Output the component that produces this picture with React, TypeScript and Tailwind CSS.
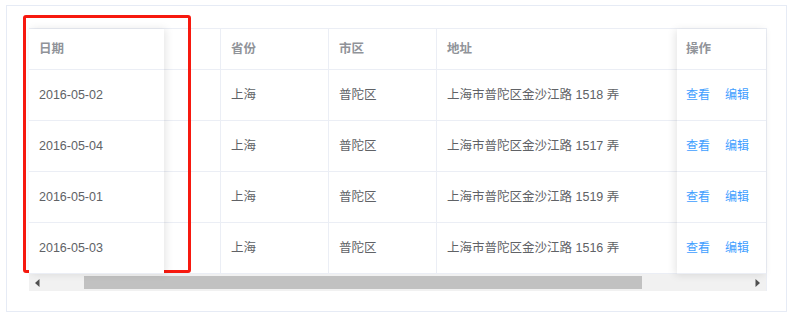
const rows = [
  { date: "2016-05-02", province: "上海", city: "普陀区", address: "上海市普陀区金沙江路 1518 弄" },
  { date: "2016-05-04", province: "上海", city: "普陀区", address: "上海市普陀区金沙江路 1517 弄" },
  { date: "2016-05-01", province: "上海", city: "普陀区", address: "上海市普陀区金沙江路 1519 弄" },
  { date: "2016-05-03", province: "上海", city: "普陀区", address: "上海市普陀区金沙江路 1516 弄" },
];

const font = { fontFamily: '"Liberation Sans", "Noto Sans CJK SC", sans-serif' };

/** One column of the table: a header cell and one body cell per row. */
function Column({
  title,
  cells,
  className = "",
  pad = "pl-[10px]",
}: {
  title: string;
  cells: React.ReactNode[];
  className?: string;
  pad?: string;
}) {
  return (
    <div className={`flex shrink-0 flex-col bg-white ${className}`}>
      <div className={`flex h-[41px] items-center border-b border-[#ebeef5] ${pad} text-[12.5px] font-bold text-[#909399]`}>
        {title}
      </div>
      {cells.map((c, i) => (
        <div
          key={i}
          className={`flex h-[51px] items-center whitespace-nowrap border-b border-[#ebeef5] ${pad} text-[12.5px] text-[#606266]`}
        >
          {c}
        </div>
      ))}
    </div>
  );
}

function Arrow({ dir }: { dir: "left" | "right" }) {
  return (
    <div className="flex h-[17px] w-[17px] shrink-0 items-center justify-center">
      <svg width="5" height="8" viewBox="0 0 5 8">
        {dir === "left" ? (
          <polygon points="4.5,0 4.5,8 0,4" fill="#505050" />
        ) : (
          <polygon points="0.5,0 0.5,8 5,4" fill="#505050" />
        )}
      </svg>
    </div>
  );
}

export default function App() {
  return (
    <div className="relative h-[318px] w-[792px] overflow-hidden bg-white pl-[6px] pt-[5px]" style={font}>
      <div className="h-[307px] w-[781px] border border-[#e6ebf5] pl-[22px] pt-[22px]">
        <div className="w-[738px] border-r border-t border-[#ebeef5]">
          <div className="flex">
            <Column
              title="日期"
              cells={rows.map((r) => r.date)}
              className="relative z-10 w-[135px] shadow-[2px_0_8px_rgba(0,0,0,0.1)]"
            />
            <div className="flex min-w-0 flex-1 overflow-hidden">
              <Column title="" cells={rows.map(() => "")} className="w-[57px] border-r border-[#ebeef5]" />
              <Column title="省份" cells={rows.map((r) => r.province)} className="w-[108px] border-r border-[#ebeef5]" />
              <Column title="市区" cells={rows.map((r) => r.city)} className="w-[108px] border-r border-[#ebeef5]" />
              <Column title="地址" cells={rows.map((r) => r.address)} className="min-w-0 flex-1" />
            </div>
            <Column
              title="操作"
              pad="pl-[9px]"
              className="relative z-10 w-[89px] shadow-[-2px_1px_8px_rgba(0,0,0,0.1)]"
              cells={rows.map((_, i) => (
                <span key={i} className="flex gap-[15px] text-[12px] text-[#409eff]">
                  <span>查看</span>
                  <span>编辑</span>
                </span>
              ))}
            />
          </div>
          <div className="flex h-[17px] items-center bg-[#f1f1f1]">
            <Arrow dir="left" />
            <div className="ml-[38px] h-[13px] w-[558px] bg-[#c1c1c1]" />
            <div className="flex-1" />
            <Arrow dir="right" />
          </div>
        </div>
      </div>
      {/* red highlight drawn over the fixed date column */}
      <div className="absolute left-[23px] top-[15px] h-[258px] w-[168px] rounded-[3px] border-[3px] border-[#f7190f]" />
    </div>
  );
}
